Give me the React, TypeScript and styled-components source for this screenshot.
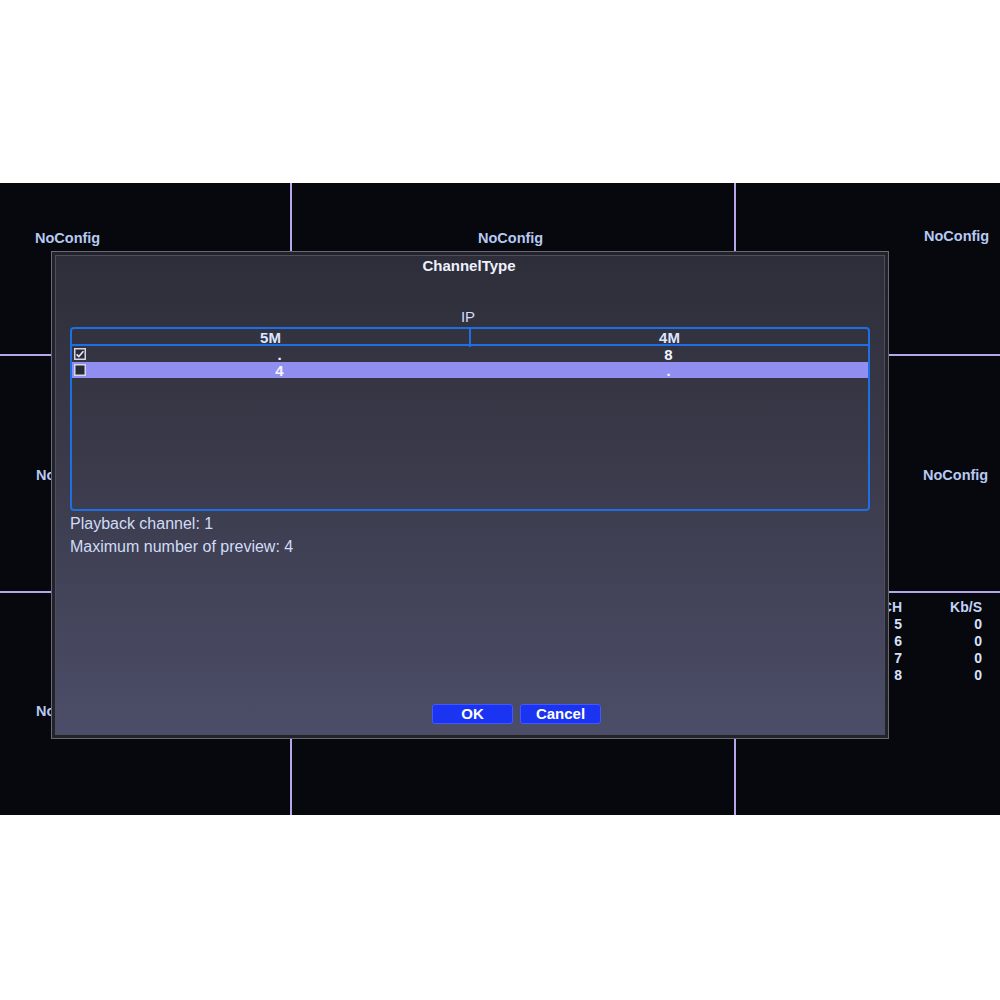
import React from "react";
import styled, { createGlobalStyle } from "styled-components";

// empty cells behind the dialog carry no label
const cells = [
    { left: 35, top: 47, label: true },
    { left: 186, top: 47, label: true },
    { left: 188, top: 45, label: true },
    { left: 36, top: 111, label: true },
    { left: 186, top: 111, label: false },
    { left: 187, top: 111, label: true },
    { left: 36, top: 110, label: true },
    { left: 186, top: 110, label: false },
];

const stats = [
    ["5", "0"],
    ["6", "0"],
    ["7", "0"],
    ["8", "0"],
];

const rows = [
    { checked: true, a: ".", b: "8", active: false },
    { checked: false, a: "4", b: ".", active: true },
];

const CheckBox = ({ checked }: { checked: boolean }) => (
    <svg width="12" height="12" viewBox="0 0 12 12">
        <rect x="0.75" y="0.75" width="10.5" height="10.5" fill="#2a2a36" stroke="#d6d6e2" strokeWidth="1.5" />
        {checked && (
            <path d="M2.6 6.4 L4.8 8.6 L9.4 3.2" fill="none" stroke="#e8e8f2" strokeWidth="1.6" />
        )}
    </svg>
);

export default function App() {
    return (
        <>
            <GlobalStyle />
            <Page>
                <TopMargin />
                <Screen>
                    <Grid>
                        {cells.map((c, i) => (
                            <Cell key={i} $left={c.left} $top={c.top}>
                                {c.label && <CellLabel>NoConfig</CellLabel>}
                            </Cell>
                        ))}
                        <StatsCell>
                            <Stats>
                                <StatHead>CH</StatHead>
                                <StatHead>Kb/S</StatHead>
                                {stats.map(([ch, kb]) => (
                                    <React.Fragment key={ch}>
                                        <StatValue>{ch}</StatValue>
                                        <StatValue>{kb}</StatValue>
                                    </React.Fragment>
                                ))}
                            </Stats>
                        </StatsCell>
                    </Grid>

                    <Dialog>
                        <Panel>
                            <Title>ChannelType</Title>
                            <GroupName>IP</GroupName>
                            <Table>
                                <HeaderRow>
                                    <HeaderCell>5M</HeaderCell>
                                    <HeaderDivider />
                                    <HeaderCell>4M</HeaderCell>
                                </HeaderRow>
                                {rows.map((r, i) => (
                                    <DataRow key={i} $active={r.active}>
                                        <BoxCell>
                                            <CheckBox checked={r.checked} />
                                        </BoxCell>
                                        <DataCell>{r.a}</DataCell>
                                        <DataCell>{r.b}</DataCell>
                                    </DataRow>
                                ))}
                            </Table>
                            <InfoLine>Playback channel: 1</InfoLine>
                            <InfoLine $gap>Maximum number of preview: 4</InfoLine>
                            <Buttons>
                                <Button>OK</Button>
                                <Button>Cancel</Button>
                            </Buttons>
                        </Panel>
                    </Dialog>
                </Screen>
                <BottomMargin />
            </Page>
        </>
    );
}

const GlobalStyle = createGlobalStyle`
    html, body {
        margin: 0;
        padding: 0;
        background: #ffffff;
    }
    body {
        font-family: "Liberation Sans", Arial, sans-serif;
    }
    * {
        box-sizing: border-box;
    }
`;

const Page = styled.div`
    width: 1000px;
    height: 1000px;
    display: flex;
    flex-direction: column;
    background: #ffffff;
`;

const TopMargin = styled.div`
    height: 183px;
`;

const BottomMargin = styled.div`
    flex: 1;
`;

const Screen = styled.div`
    position: relative;
    height: 632px;
    background: #b7a6ec;
`;

const Grid = styled.div`
    display: grid;
    grid-template-columns: 290px 442px 1fr;
    grid-template-rows: 171px 235px 1fr;
    gap: 2px;
    height: 100%;
`;

const Cell = styled.div<{ $left: number; $top: number }>`
    background: #07070e;
    padding-left: ${(p) => p.$left}px;
    padding-top: ${(p) => p.$top}px;
`;

const CellLabel = styled.div`
    font-size: 14.5px;
    font-weight: 700;
    line-height: 17px;
    color: #b6c9f1;
    white-space: nowrap;
`;

const StatsCell = styled.div`
    background: #07070e;
    display: flex;
    justify-content: flex-end;
    padding: 6px 18px 0 0;
`;

const Stats = styled.div`
    display: grid;
    grid-template-columns: 30px 80px;
    grid-auto-rows: 17px;
    align-content: start;
    text-align: right;
`;

const StatHead = styled.div`
    font-size: 14px;
    font-weight: 700;
    line-height: 17px;
    color: #c3d4f6;
`;

const StatValue = styled(StatHead)`
    color: #d6e1fa;
`;

const Dialog = styled.div`
    position: absolute;
    left: 51px;
    top: 68px;
    width: 838px;
    height: 488px;
    border: 1px solid #6a6a77;
    background: #23232c;
    padding: 3px;
`;

const Panel = styled.div`
    height: 100%;
    display: flex;
    flex-direction: column;
    border: 1px solid #4e4e5c;
    background: linear-gradient(180deg, #2e2e3a 0%, #393949 40%, #4c4d68 100%);
    padding: 1px 14px 10px 14px;
`;

const Title = styled.div`
    font-size: 15px;
    font-weight: 700;
    line-height: 18px;
    color: #eef1fb;
    text-align: center;
    margin-left: -2px;
`;

const GroupName = styled.div`
    margin-top: 33px;
    font-size: 15px;
    line-height: 18px;
    color: #cfdbfb;
    text-align: center;
    margin-right: 4px;
`;

const Table = styled.div`
    margin-top: 1px;
    height: 184px;
    border: 2px solid #1f6fe4;
    border-radius: 4px;
`;

const HeaderRow = styled.div`
    display: grid;
    grid-template-columns: 1fr 2px 1fr;
    height: 17px;
    border-bottom: 2px solid #1f6fe4;
`;

const HeaderCell = styled.div`
    font-size: 15px;
    font-weight: 700;
    line-height: 18px;
    color: #dce6ff;
    text-align: center;
`;

const HeaderDivider = styled.div`
    background: #1f6fe4;
`;

const DataRow = styled.div<{ $active: boolean }>`
    display: grid;
    grid-template-columns: 18px 379px 1fr;
    height: 16px;
    align-items: center;
    background: ${(p) => (p.$active ? "#918ef2" : "transparent")};
`;

const BoxCell = styled.div`
    display: flex;
    align-items: center;
    padding-left: 2px;
    height: 16px;
`;

const DataCell = styled.div`
    font-size: 15px;
    font-weight: 700;
    line-height: 16px;
    padding-top: 1px;
    height: 16px;
    color: #f2f4ff;
    text-align: center;
`;

const InfoLine = styled.div<{ $gap?: boolean }>`
    margin-top: ${(p) => (p.$gap ? "5px" : "4px")};
    font-size: 16px;
    line-height: 18px;
    color: #d0dcf7;
`;

const Buttons = styled.div`
    margin-top: auto;
    display: flex;
    gap: 7px;
    padding-left: 362px;
`;

const Button = styled.div`
    width: 81px;
    height: 20px;
    border: 1px solid #4358ff;
    border-radius: 3px;
    background: #1b34f2;
    color: #ffffff;
    font-size: 15px;
    font-weight: 700;
    line-height: 18px;
    text-align: center;
`;
